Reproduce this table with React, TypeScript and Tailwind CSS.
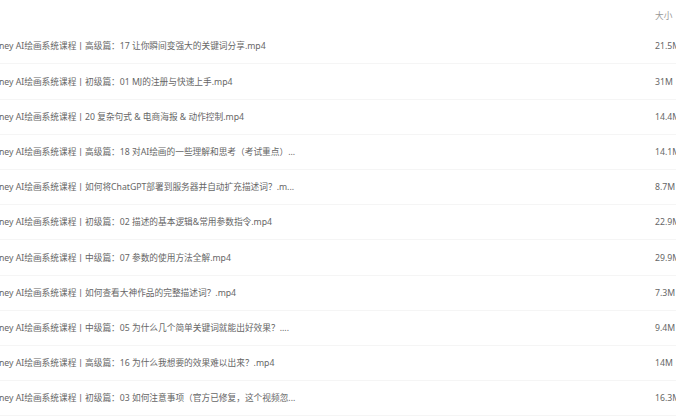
const files: { name: string; size: string }[] = [
  { name: '高级篇：17 让你瞬间变强大的关键词分享.mp4', size: '21.5M' },
  { name: '初级篇：01 MJ的注册与快速上手.mp4', size: '31M' },
  { name: '20 复杂句式 & 电商海报 & 动作控制.mp4', size: '14.4M' },
  { name: '高级篇：18 对AI绘画的一些理解和思考（考试重点）...', size: '14.1M' },
  { name: '如何将ChatGPT部署到服务器并自动扩充描述词？.m...', size: '8.7M' },
  { name: '初级篇：02 描述的基本逻辑&常用参数指令.mp4', size: '22.9M' },
  { name: '中级篇：07 参数的使用方法全解.mp4', size: '29.9M' },
  { name: '如何查看大神作品的完整描述词？.mp4', size: '7.3M' },
  { name: '中级篇：05 为什么几个简单关键词就能出好效果？....', size: '9.4M' },
  { name: '高级篇：16 为什么我想要的效果难以出来？.mp4', size: '14M' },
  { name: '初级篇：03 如何注意事项（官方已修复，这个视频忽...', size: '16.3M' },
];

export default function App() {
  return (
    <div
      className="h-[418px] w-[676px] overflow-hidden bg-white text-[8.7px] text-[#666]"
      style={{ fontFamily: '"Noto Sans", "Noto Sans CJK SC", sans-serif' }}
    >
      <div className="ml-[-33px] w-[800px]">
        <div className="flex h-[29.3px] items-start pt-[10px] leading-[12px]">
          <div className="w-[688px]" />
          <div className="text-[#999]">大小</div>
        </div>
        {files.map((f) => (
          <div
            key={f.name}
            className="flex h-[35.2px] items-center border-b border-[#f5f5f5] leading-[12px]"
          >
            <div className="w-[688px] whitespace-nowrap">Midjourney AI绘画系统课程丨{f.name}</div>
            <div>{f.size}</div>
          </div>
        ))}
      </div>
    </div>
  );
}
